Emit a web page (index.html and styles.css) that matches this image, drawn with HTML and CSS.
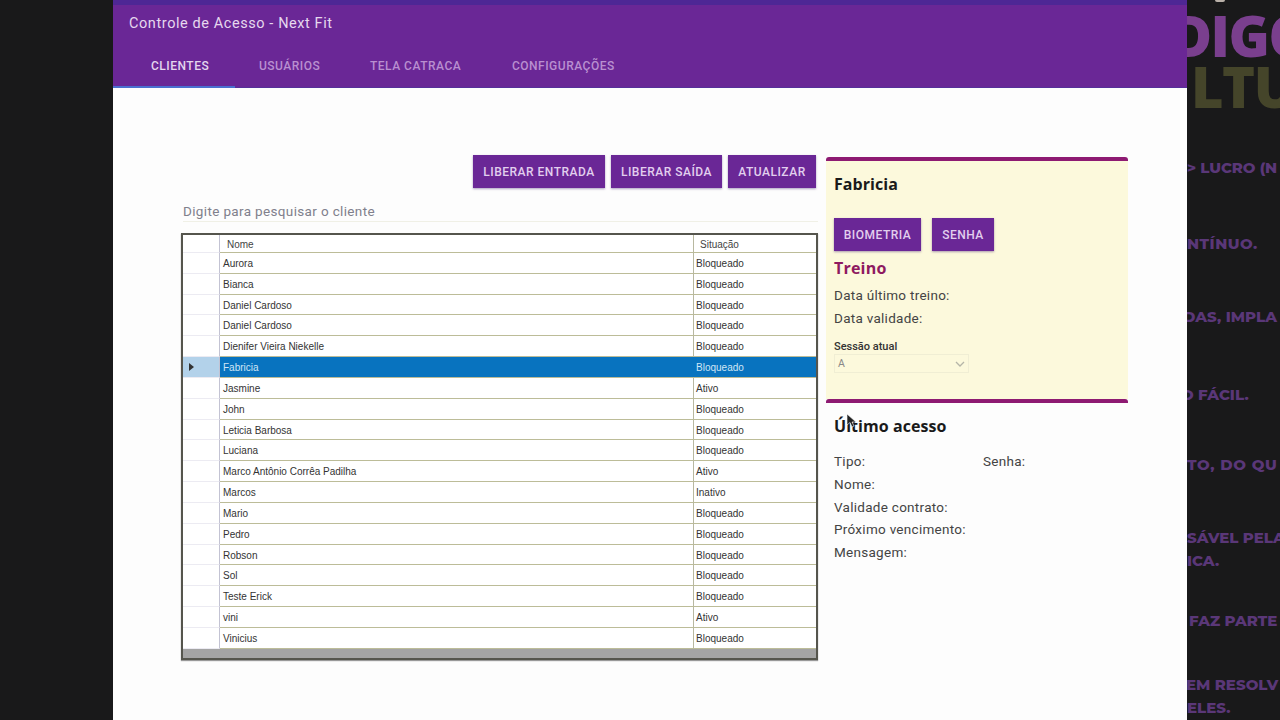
FILE: index.html
```html
<!DOCTYPE html>
<html lang="pt-BR">
<head>
<meta charset="utf-8">
<title>Controle de Acesso - Next Fit</title>
<link rel="stylesheet" href="styles.css">
</head>
<body>
<div class="side-left"></div>
<main class="app">
  <header class="topbar">
    <div class="app-title">Controle de Acesso - Next Fit</div>
    <nav class="tabs">
      <span class="tab tab-active">Clientes</span>
      <span class="tab tab-users">Usuários</span>
      <span class="tab tab-catraca">Tela Catraca</span>
      <span class="tab tab-config">Configurações</span>
    </nav>
  </header>
  <section class="content">
    <div class="left-col">
      <div class="actions">
        <button class="btn btn-entrada">Liberar entrada</button>
        <button class="btn btn-saida">Liberar saída</button>
        <button class="btn btn-atualizar">Atualizar</button>
      </div>
      <div class="search">Digite para pesquisar o cliente</div>
      <div class="grid">
        <div class="row head"><span class="rh"></span><span class="c-name head-name">Nome</span><span class="c-sit head-sit">Situação</span></div>
        <div class="row"><span class="rh"></span><span class="c-name">Aurora</span><span class="c-sit">Bloqueado</span></div>
        <div class="row"><span class="rh"></span><span class="c-name">Bianca</span><span class="c-sit">Bloqueado</span></div>
        <div class="row"><span class="rh"></span><span class="c-name">Daniel Cardoso</span><span class="c-sit">Bloqueado</span></div>
        <div class="row"><span class="rh"></span><span class="c-name">Daniel Cardoso</span><span class="c-sit">Bloqueado</span></div>
        <div class="row"><span class="rh"></span><span class="c-name">Dienifer Vieira Niekelle</span><span class="c-sit">Bloqueado</span></div>
        <div class="row selected"><span class="rh"><svg class="arrow" width="5" height="8" viewBox="0 0 5 8"><path d="M0 0L5 4L0 8Z"/></svg></span><span class="c-name">Fabricia</span><span class="c-sit">Bloqueado</span></div>
        <div class="row"><span class="rh"></span><span class="c-name">Jasmine</span><span class="c-sit">Ativo</span></div>
        <div class="row"><span class="rh"></span><span class="c-name">John</span><span class="c-sit">Bloqueado</span></div>
        <div class="row"><span class="rh"></span><span class="c-name">Leticia Barbosa</span><span class="c-sit">Bloqueado</span></div>
        <div class="row"><span class="rh"></span><span class="c-name">Luciana</span><span class="c-sit">Bloqueado</span></div>
        <div class="row"><span class="rh"></span><span class="c-name">Marco Antônio Corrêa Padilha</span><span class="c-sit">Ativo</span></div>
        <div class="row"><span class="rh"></span><span class="c-name">Marcos</span><span class="c-sit">Inativo</span></div>
        <div class="row"><span class="rh"></span><span class="c-name">Mario</span><span class="c-sit">Bloqueado</span></div>
        <div class="row"><span class="rh"></span><span class="c-name">Pedro</span><span class="c-sit">Bloqueado</span></div>
        <div class="row"><span class="rh"></span><span class="c-name">Robson</span><span class="c-sit">Bloqueado</span></div>
        <div class="row"><span class="rh"></span><span class="c-name">Sol</span><span class="c-sit">Bloqueado</span></div>
        <div class="row"><span class="rh"></span><span class="c-name">Teste Erick</span><span class="c-sit">Bloqueado</span></div>
        <div class="row"><span class="rh"></span><span class="c-name">vini</span><span class="c-sit">Ativo</span></div>
        <div class="row"><span class="rh"></span><span class="c-name">Vinicius</span><span class="c-sit">Bloqueado</span></div>
        <div class="grid-foot"></div>
      </div>
    </div>
    <aside class="right-col">
      <div class="card card-client">
        <h2 class="card-title">Fabricia</h2>
        <div class="card-actions">
          <button class="btn btn-bio">Biometria</button>
          <button class="btn btn-senha">Senha</button>
        </div>
        <h3 class="treino">Treino</h3>
        <div class="info">Data último treino:</div>
        <div class="info">Data validade:</div>
        <div class="sess-label">Sessão atual</div>
        <div class="select"><span>A</span>
          <svg width="10" height="6" viewBox="0 0 10 6"><path d="M1 1L5 5L9 1" fill="none" stroke="#b5b5a8" stroke-width="1.3"/></svg>
        </div>
      </div>
      <div class="card card-access">
        <h2 class="card-title">Último acesso</h2>
        <svg class="cursor" width="10" height="14" viewBox="0 0 10 14"><path d="M0 0L0 11L3 8.5L5 13L7 12L5 8L9 8Z" fill="#222" stroke="#fff" stroke-width=".6"/></svg>
        <div class="access-grid">
          <div class="info tipo">Tipo:</div><div class="info">Senha:</div>
        </div>
        <div class="info">Nome:</div>
        <div class="info">Validade contrato:</div>
        <div class="info">Próximo vencimento:</div>
        <div class="info">Mensagem:</div>
      </div>
    </aside>
  </section>
</main>
<div class="side-right">
  <div class="speck"></div>
  <div class="big purple">DIGO</div>
  <div class="big olive">LTU</div>
  <div class="ln l1">&gt; LUCRO (N</div>
  <div class="ln l2">NTÍNUO.</div>
  <div class="ln l3">DAS, IMPLA</div>
  <div class="ln l4">O FÁCIL.</div>
  <div class="ln l5">TO, DO QU</div>
  <div class="ln l6">SÁVEL PELA</div>
  <div class="ln l7">ICA.</div>
  <div class="ln l8">FAZ PARTE</div>
  <div class="ln l9">EM RESOLV</div>
  <div class="ln l10">ELES.</div>
</div>
</body>
</html>
```
FILE: styles.css
```css
* { box-sizing: border-box; }
html, body { margin: 0; height: 720px; overflow: hidden; }
body { display: flex; background: #19191a; font-family: Roboto, "Liberation Sans", sans-serif; }
.side-left { width: 113px; flex: none; background: #19191a; }
.app { width: 1074px; flex: none; background: #fdfdfd; display: flex; flex-direction: column; }

.topbar { height: 88px; flex: none; background: #6a2796; border-top: 5px solid #4e2795; border-bottom: 1px solid #55309a; }
.app-title { color: #e6d8ee; font-size: 14.5px; font-weight: 400; letter-spacing: .58px; padding: 10px 0 0 16px; line-height: 18px; }
.tabs { display: flex; margin-top: 19px; height: 36px; }
.tab { font-size: 12px; font-weight: 500; letter-spacing: .5px; text-transform: uppercase; color: #b98fd0; line-height: 15px; padding-top: 7px; }
.tab-active { width: 122px; padding-left: 38px; color: #e4d6ee; border-bottom: 2px solid #4a6fd0; }
.tab-users { margin-left: 24px; width: 111px; }
.tab-catraca { width: 142px; }

.content { display: flex; flex: 1; padding: 67px 0 0 68px; }
.left-col { width: 637px; margin-right: 8px; flex: none; }
.actions { display: flex; justify-content: flex-end; gap: 6px; margin-right: 2px; }
.btn { display: block; border: 0; margin: 0; background: #6a2796; color: #e2cfee; font-family: Roboto, sans-serif; font-size: 12px; font-weight: 500; letter-spacing: .5px; text-transform: uppercase; height: 33px; padding: 0; box-shadow: 0 1px 2px rgba(90, 60, 130, .5); }
.btn-entrada { width: 132px; }
.btn-saida { width: 111px; }
.btn-atualizar { width: 88px; }
.search { margin: 15px 0 0 2px; color: #80808c; font-size: 13.5px; letter-spacing: .35px; line-height: 17px; height: 19px; border-bottom: 1px solid #f0f0e6; }

.grid { margin-top: 11px; height: 427px; width: 637px; border: 2px solid #55554d; background: #fff; display: flex; flex-direction: column; box-shadow: 0 1px 1px #999; font-family: "Liberation Sans", Arial, sans-serif; font-size: 10px; color: #333; }
.row { height: 20.83px; flex: none; display: grid; grid-template-columns: 37px 474px 1fr; grid-template-rows: minmax(0, 1fr); line-height: 21px; }
.row.head { height: 18px; line-height: 20px; color: #444; }
.rh { border-right: 1px solid #c3c3d3; border-bottom: 1px solid #ecebf2; display: flex; align-items: center; padding-left: 6px; }
.c-name { padding-left: 3px; border-right: 1px solid #b8b8a0; border-bottom: 1px solid #bcbc98; white-space: nowrap; }
.head-name { padding-left: 7px; }
.c-sit { padding-left: 2px; border-bottom: 1px solid #bcbc98; white-space: nowrap; }
.head-sit { padding-left: 6px; }
.selected .rh { background: #b3d2ea; }
.selected .c-name, .selected .c-sit { background: #0873bf; color: #cfe6f5; border-right: 0; }
.arrow path { fill: #333; }
.grid-foot { flex: 1; background: #a4a4a4; min-height: 0; }

.right-col { width: 302px; flex: none; }
.card { position: relative; border-top: 4px solid #8e1a72; border-radius: 3px 3px 0 0; padding: 0 8px; }
.card-client { height: 242px; background: #fcf9dc; margin-top: 2px; }
.card-title { margin: 0; font-family: "Open Sans", "Noto Sans", sans-serif; font-size: 16px; font-weight: 700; letter-spacing: .05px; color: #1a1a1a; line-height: 22px; padding-top: 12px; height: 35px; box-sizing: content-box; }
.card-actions { display: flex; gap: 11px; margin-top: 10px; }
.btn-bio { width: 87px; }
.btn-senha { width: 62px; }
.treino { margin: 7px 0 0; font-family: "Open Sans", sans-serif; font-size: 16px; font-weight: 700; letter-spacing: .2px; color: #8e1a60; line-height: 20px; }
.info { font-size: 13.5px; color: #444; line-height: 22.5px; letter-spacing: .28px; }
.card-access .info { line-height: 22.75px; }
.treino + .info { margin-top: 6px; }
.sess-label { margin-top: 11px; font-size: 11px; font-weight: 500; color: #333; line-height: 14px; }
.select { display: flex; align-items: center; justify-content: space-between; width: 135px; height: 19px; padding: 0 3px; border: 1px solid #f0eed4; font-size: 10.5px; color: #888; }
.card-access { height: 240px; }
.card-access .card-title { padding-top: 12px; height: 23px; }
.cursor { position: absolute; left: 21px; top: 11px; }
.access-grid { display: grid; grid-template-columns: 149px 1fr; margin-top: 12px; }

.side-right { width: 93px; flex: none; overflow: hidden; color: #70408c; white-space: nowrap; font-family: Montserrat, "Open Sans", sans-serif; font-weight: 800; font-size: 15px; }
.speck { width: 10px; height: 2px; margin-left: 28px; background: #b9b0a8; border-radius: 0 0 5px 5px; }
.big { font-family: "Open Sans", sans-serif; font-size: 56px; font-weight: 800; line-height: 51px; letter-spacing: -1.5px; margin-left: -16px; }
.purple { margin-top: 8px; color: #7a3f8e; }
.olive { color: #45452a; margin-left: 4px; }
.ln { line-height: 20px; color: #5a3778; height: 20px; }
.l1 { margin-top: 46px; margin-left: 0; letter-spacing: -.1px; }
.l2 { margin-top: 56px; margin-left: 0; letter-spacing: .5px; }
.l3 { margin-top: 53px; margin-left: -4px; }
.l4 { margin-top: 58px; margin-left: -6px; }
.l5 { margin-top: 50px; margin-left: 0; letter-spacing: .7px; }
.l6 { margin-top: 53px; margin-left: 0; }
.l7 { margin-top: 3px; margin-left: 0; }
.l8 { margin-top: 40px; margin-left: 2px; }
.l9 { margin-top: 44px; margin-left: -1px; }
.l10 { margin-top: 3px; margin-left: 0; }
```
